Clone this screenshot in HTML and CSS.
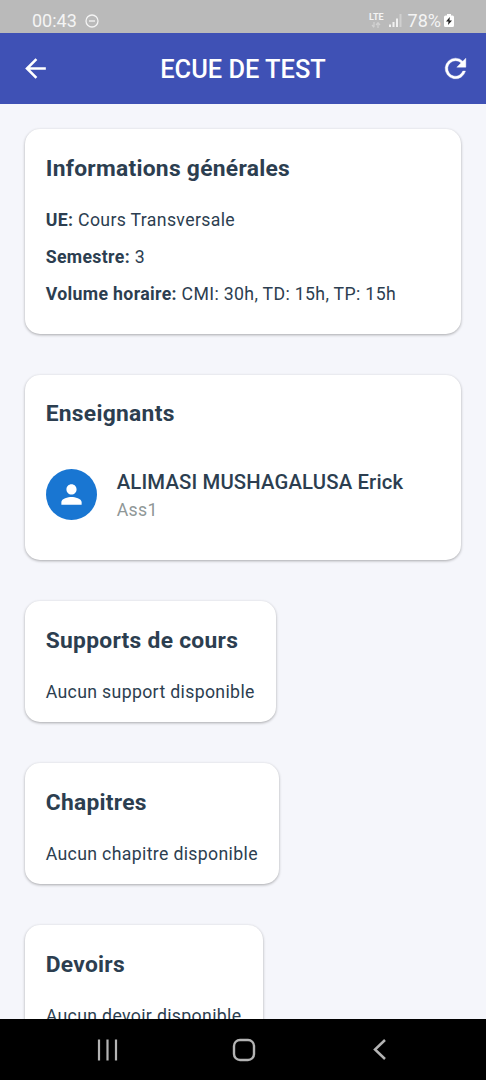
FILE: index.html
```html
<!DOCTYPE html>
<html lang="fr">
<head>
<meta charset="utf-8">
<title>ECUE DE TEST</title>
<link rel="stylesheet" href="styles.css">
</head>
<body>
<div class="screen">
  <div class="status">
    <span class="time">00:43</span>
    <svg class="dnd" width="14" height="14" viewBox="0 0 14 14" fill="none" stroke="#f4f4f4" stroke-width="1.3"><circle cx="7" cy="7" r="6"/><path d="M4 7h6"/></svg>
    <span class="network"><b>LTE</b><svg width="10" height="6" viewBox="0 0 10 6" fill="none" stroke="#d2d2d2" stroke-width="1.2"><path d="M3 0v5M1 3l2 2.300M7 6V1M5 3l2-2.300 2 2.300"/></svg></span>
    <svg class="signal" width="13" height="13" viewBox="0 0 13 13"><path fill="#f2f2f2" d="M0 10.500h2V13H0zM3.500 8h2v5h-2zM7 4.500h2V13H7z"/><path fill="#d0d0d0" d="M10.500 0h2v13h-2z"/></svg>
    <span class="percent">78%</span>
    <svg class="battery" width="10" height="13" viewBox="0 0 10 13"><path fill="#fff" d="M3 0h4v1.500h1.500Q10 1.500 10 3v8.500Q10 13 8.500 13h-7Q0 13 0 11.500V3q0-1.500 1.500-1.500H3z"/><path fill="#222" d="M5.800 3 2 7.500h2.500L4 11l4-4.500H5.500z"/></svg>
  </div>
  <header class="appbar">
    <svg class="back" width="31" height="31" viewBox="0 0 24 24" fill="#fff"><path d="M20 11H7.830l5.590-5.590L12 4l-8 8 8 8 1.410-1.410L7.830 13H20z"/></svg>
    <h1 class="title">ECUE DE TEST</h1>
    <svg class="refresh" width="31" height="31" viewBox="0 0 24 24" fill="#fff" stroke="#fff" stroke-width=".3"><path d="M17.650 6.350A7.958 7.958 0 0 0 12 4a8 8 0 1 0 7.730 10h-2.080A6 6 0 1 1 12 6c1.660 0 3.140.69 4.220 1.780L13 11h7V4z"/></svg>
  </header>
  <main class="content">
    <section class="card wide info">
      <h2>Informations générales</h2>
      <p><b>UE:</b> Cours Transversale</p>
      <p><b>Semestre:</b> 3</p>
      <p><b>Volume horaire:</b> CMI: 30h, TD: 15h, TP: 15h</p>
    </section>
    <section class="card wide teachers">
      <h2>Enseignants</h2>
      <div class="teacher">
        <svg class="avatar" width="51" height="51" viewBox="0 0 51 51"><circle cx="25.500" cy="25.500" r="25.500" fill="#1976d2"/><path fill="#fff" transform="translate(10.300 10.300) scale(1.267)" d="M12 12c2.210 0 4-1.790 4-4s-1.790-4-4-4-4 1.790-4 4 1.790 4 4 4zm0 2c-2.670 0-8 1.340-8 4v2h16v-2c0-2.660-5.330-4-8-4z"/></svg>
        <div><div class="name">ALIMASI MUSHAGALUSA Erick</div><div class="grade">Ass1</div></div>
      </div>
    </section>
    <section class="card"><h2>Supports de cours</h2><p>Aucun support disponible</p></section>
    <section class="card"><h2>Chapitres</h2><p>Aucun chapitre disponible</p></section>
    <section class="card"><h2>Devoirs</h2><p>Aucun devoir disponible</p></section>
  </main>
  <nav class="navbar">
    <svg width="22" height="22" viewBox="0 0 22 22" stroke="#b4b4b4" stroke-width="2.200"><path d="M2 .5v21M10.500 .5v21M19 .5v21"/></svg>
    <svg width="24" height="24" viewBox="0 0 24 24" fill="none" stroke="#b4b4b4" stroke-width="2.400"><rect x="2" y="2" width="20" height="20" rx="6"/></svg>
    <svg width="22" height="22" viewBox="0 0 22 22" fill="none" stroke="#b4b4b4" stroke-width="2.500"><path d="M17 1 7 10.500 17 20"/></svg>
  </nav>
</div>
</body>
</html>
```
FILE: styles.css
```css
* { box-sizing: border-box; margin: 0; }
body { background: #f5f6fb; font-family: Roboto, sans-serif; color: #2c3e50; }
svg { display: block; flex: none; }
.screen { height: 1080px; display: flex; flex-direction: column; overflow: hidden; }
.status { flex: none; height: 33px; background: #bababa; color: #f4f4f4; display: flex; align-items: center; padding: 8px 32px 0; font-size: 18px; line-height: 24px; }
.dnd { margin-left: 8px; }
.network { margin-left: auto; display: flex; flex-direction: column; align-items: center; font-size: 9px; line-height: 9px; }
.signal { margin-left: 5px; }
.percent { margin-left: 6px; }
.battery { margin-left: 3px; }
.appbar { flex: none; height: 71px; background: #3f51b5; color: #fff; display: flex; align-items: center; justify-content: space-between; padding: 0 15px 1px 20px; }
.title { font-size: 25.400px; font-weight: 500; line-height: 30px; padding: 2px 5px 0 0; }
.content { flex: 1; min-height: 0; overflow: hidden; display: flex; flex-direction: column; align-items: flex-start; gap: 41px; padding: 25px; }
.card { flex: none; background: #fff; border-radius: 15px; padding: 21px 21.300px 0 20.700px; height: 121px; box-shadow: 0 1px 3px rgba(0,0,0,.32); }
.wide { width: 436px; }
.info { height: 205px; }
.teachers { height: 185px; }
h2 { font-size: 22.800px; font-weight: 700; line-height: 38px; letter-spacing: .28px; margin-bottom: 19.500px; white-space: nowrap; }
.teachers h2 { margin-top: -1px; }
p { font-size: 17.700px; line-height: 25px; letter-spacing: .34px; margin-bottom: 12px; white-space: nowrap; }
.teacher { display: flex; align-items: center; gap: 20px; padding-top: 14px; }
.name { font-size: 20.300px; font-weight: 500; line-height: 30px; letter-spacing: .16px; }
.grade { font-size: 17.700px; line-height: 26px; letter-spacing: .32px; color: #8f9797; }
.navbar { flex: none; height: 61px; background: #000; display: flex; align-items: center; justify-content: space-between; padding: 0 96px 0 97px; }
```
